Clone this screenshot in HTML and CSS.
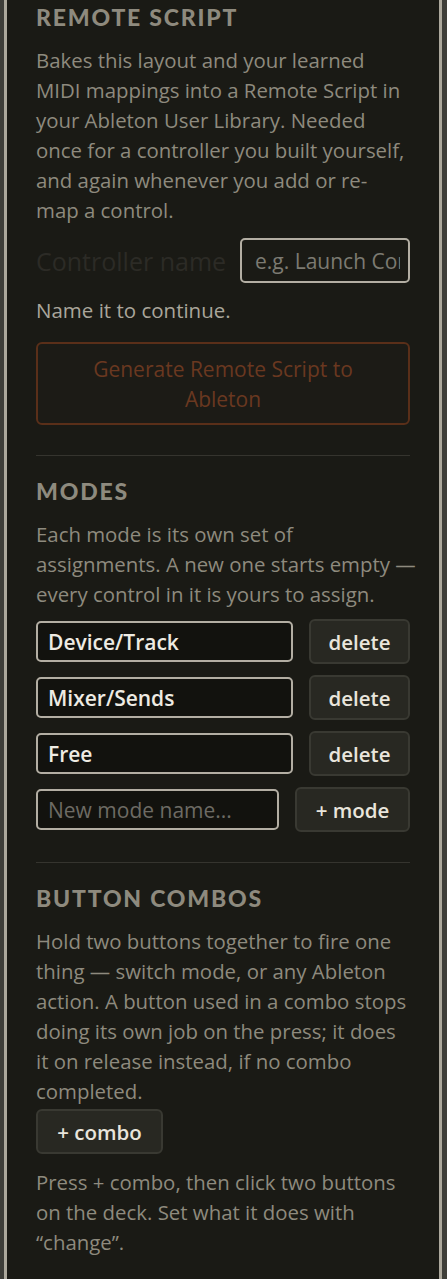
FILE: index.html
```html
<!DOCTYPE html>
<html>
<head>
<meta charset="utf-8">
<link rel="stylesheet" href="styles.css">
</head>
<body>
<div class="panel">
  <section class="sec first">
    <h2 class="head">REMOTE SCRIPT</h2>
    <p class="txt">Bakes this layout and your learned<br>MIDI mappings into a Remote Script in<br>your Ableton User Library. Needed<br>once for a controller you built yourself,<br>and again whenever you add or re-<br>map a control.</p>
    <div class="namerow">
      <span class="lbl">Controller name</span>
      <input class="field namefield" type="text" placeholder="e.g. Launch Control XL">
    </div>
    <p class="hint">Name it to continue.</p>
    <button class="gen">Generate Remote Script to Ableton</button>
  </section>
  <section class="sec">
    <h2 class="head">MODES</h2>
    <p class="txt">Each mode is its own set of<br>assignments. A new one starts empty —<br>every control in it is yours to assign.</p>
    <div class="modes">
      <div class="moderow"><input class="field mode" type="text" value="Device/Track"><button class="btn del">delete</button></div>
      <div class="moderow"><input class="field mode" type="text" value="Mixer/Sends"><button class="btn del">delete</button></div>
      <div class="moderow"><input class="field mode" type="text" value="Free"><button class="btn del">delete</button></div>
      <div class="moderow newrow"><input class="field mode newmode" type="text" placeholder="New mode name..."><button class="btn add">+ mode</button></div>
    </div>
  </section>
  <section class="sec">
    <h2 class="head">BUTTON COMBOS</h2>
    <p class="txt">Hold two buttons together to fire one<br>thing — switch mode, or any Ableton<br>action. A button used in a combo stops<br>doing its own job on the press; it does<br>it on release instead, if no combo<br>completed.</p>
    <button class="btn combo">+ combo</button>
    <p class="txt after">Press + combo, then click two buttons<br>on the deck. Set what it does with<br>“change”.</p>
  </section>
</div>
</body>
</html>
```
FILE: styles.css
```css
html, body {
  margin: 0;
  padding: 0;
  background: #3e3e39;
  height: 1279px;
  overflow: hidden;
}
body {
  font-family: "Open Sans", "Noto Sans", sans-serif;
}
.panel {
  margin-left: 4px;
  width: 438px;
  height: 1279px;
  border-left: 3px solid #aca89c;
  border-right: 3px solid #aca89c;
  background: #1a1a15;
  padding: 0 29px;
  box-sizing: border-box;
}
.sec {
  border-top: 1px solid #35342e;
  padding: 21px 0 30px;
}
.sec.first {
  border-top: none;
  padding-top: 3px;
}
.head {
  margin: 0;
  font-family: "Lato", sans-serif;
  font-size: 23px;
  font-weight: 900;
  letter-spacing: 1.8px;
  color: #8e8a7e;
  line-height: 28px;
}
.txt {
  margin: 14px 0 0;
  font-size: 20.4px;
  line-height: 30px;
  color: #8e8a7e;
  white-space: nowrap;
}
.namerow {
  display: flex;
  align-items: center;
  justify-content: space-between;
  margin-top: 13px;
}
.lbl {
  font-size: 25px;
  color: #2c2b26;
  white-space: nowrap;
}
.field {
  font-family: inherit;
  background: #12120e;
  border: 2px solid #b3aea3;
  border-radius: 5px;
  box-sizing: border-box;
  outline: none;
}
.namefield {
  width: 170px;
  height: 45px;
  padding: 0 8px 0 13px;
  font-size: 21px;
  color: #7c7a72;
  background: #1a1a15;
}
.namefield::placeholder { color: #7c7a72; }
.hint {
  margin: 12px 0 0;
  font-size: 20.5px;
  line-height: 30px;
  color: #aaa69b;
}
.gen {
  display: block;
  width: 100%;
  margin-top: 17px;
  height: 83px;
  background: #1c1b16;
  border: 2px solid #5a2f19;
  border-radius: 6px;
  font-family: inherit;
  font-size: 21px;
  line-height: 30px;
  color: #6a3820;
  padding: 0 50px;
}
.modes {
  display: flex;
  flex-direction: column;
  gap: 11px;
  margin-top: 10px;
}
.moderow {
  display: flex;
  align-items: center;
  justify-content: space-between;
  height: 45px;
}
.mode {
  width: 257px;
  height: 41px;
  padding: 0 10px;
  font-size: 21px;
  font-weight: 600;
  color: #eeebe3;
}
.newmode {
  width: 243px;
  font-weight: 400;
}
.newmode::placeholder { color: #6d6b64; }
.btn {
  font-family: inherit;
  background: #282822;
  border: 2px solid #393932;
  border-radius: 6px;
  color: #e9e5dc;
  font-size: 20.5px;
  font-weight: 600;
  height: 45px;
  padding: 0;
  box-sizing: border-box;
}
.del { width: 101px; }
.add { width: 115px; }
.combo {
  display: block;
  width: 127px;
  margin-top: 3px;
}
.txt.after { margin-top: 13px; }
```
